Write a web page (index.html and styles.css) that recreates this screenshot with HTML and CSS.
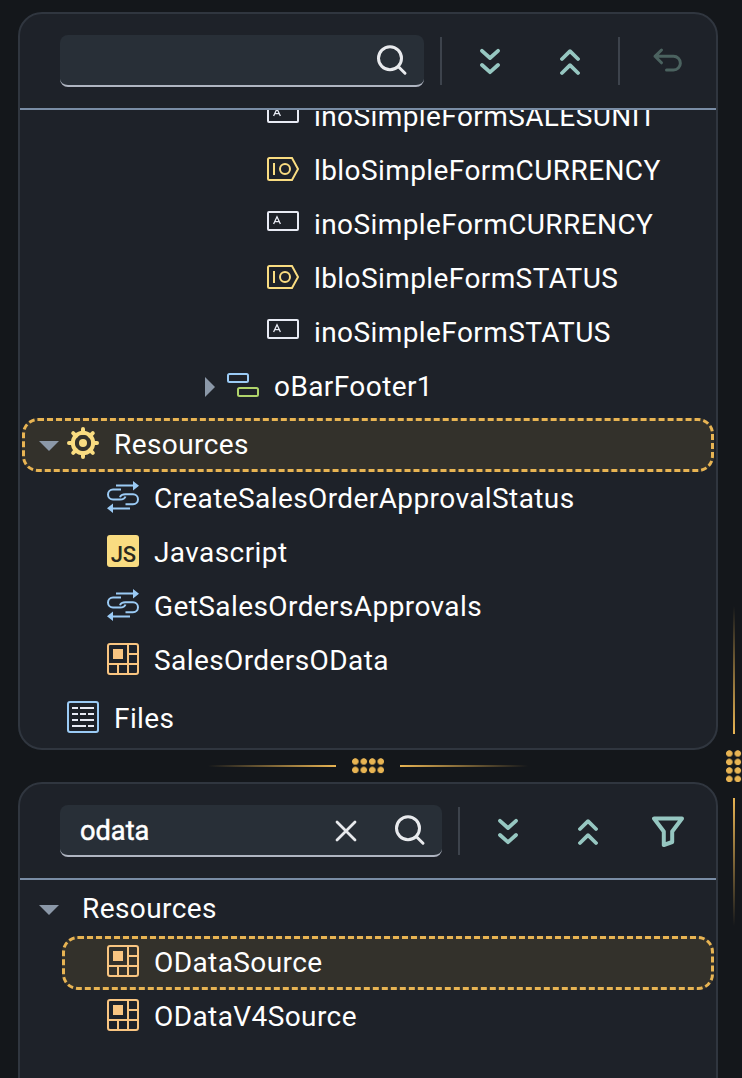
FILE: index.html
```
<!DOCTYPE html>
<html lang="en">
<head>
<meta charset="utf-8">
<title>Application tree</title>
<link rel="stylesheet" href="styles.css">
</head>
<body>
<svg class="defs" aria-hidden="true">
  <symbol id="search" viewBox="0 0 32 32"><circle cx="14" cy="14.3" r="11.5"/><path d="M22.2 22.5 29 29.2"/></symbol>
  <symbol id="down" viewBox="0 0 20 28"><path d="M2 2.8 10 10 18 2.8M2 17 10 24.2 18 17"/></symbol>
  <symbol id="up" viewBox="0 0 20 28"><path d="M2 11 10 3.2 18 11M2 25 10 17.2 18 25"/></symbol>
  <symbol id="input" viewBox="0 0 32 32"><rect x="1" y="5" width="30" height="18" rx="1"/><path class="thin" d="M6.600 17 10 9.800 13.400 17M7.600 14.600H12.400"/></symbol>
  <symbol id="label" viewBox="0 0 32 32"><path d="M2.500 5H25L31 16 25 27H2.500Q1 27 1 25.500V6.500Q1 5 2.500 5ZM7 10V22"/><circle cx="18" cy="16" r="5"/></symbol>
  <symbol id="service" viewBox="0 0 32 32"><path d="M9 4.500H26M14 8.500H6A5 5 0 0 0 6 18.500H13Q17.500 18.500 18.500 15.500M13 16.200Q14 13.200 18.500 13.200H26A5 5 0 0 1 26 23.200H18.500M6 27.500H23"/><path class="solid" d="M26 0 32 4.700 26 9.400ZM6 22.600 0 27.300 6 32Z"/></symbol>
  <symbol id="odata" viewBox="0 0 32 32"><rect x="1" y="1" width="30" height="30" rx="2"/><path d="M1 21H31M21 1V31M11 21V31M21 11H31"/><path class="solid" d="M6 6H16V16H6Z"/></symbol>
</svg>
<div class="workspace">
  <section class="panel panel-top">
    <header class="toolbar">
      <div class="search"><svg class="i-search"><use href="#search"/></svg></div>
      <span class="divider"></span>
      <svg class="i-chev"><use href="#down"/></svg>
      <svg class="i-chev"><use href="#up"/></svg>
      <span class="divider divider-undo"></span>
      <svg class="i-undo" viewBox="0 0 32 28"><path d="M9.500 3 3 9.300 9.500 15.800M3 9.300H21.500A6.500 6.500 0 0 1 21.500 23H14.500"/></svg>
    </header>
    <div class="tree tree-scrolled">
      <div class="row lv6 white"><svg class="icon"><use href="#input"/></svg><span>inoSimpleFormSALESUNIT</span></div>
      <div class="row lv6 yellow"><svg class="icon"><use href="#label"/></svg><span>lbloSimpleFormCURRENCY</span></div>
      <div class="row lv6 white"><svg class="icon"><use href="#input"/></svg><span>inoSimpleFormCURRENCY</span></div>
      <div class="row lv6 yellow"><svg class="icon"><use href="#label"/></svg><span>lbloSimpleFormSTATUS</span></div>
      <div class="row lv6 white"><svg class="icon"><use href="#input"/></svg><span>inoSimpleFormSTATUS</span></div>
      <div class="row lv5"><i class="caret-right"></i><svg class="icon" viewBox="0 0 32 32"><rect class="blue" x="1" y="5" width="20" height="8" rx="1.500"/><rect class="green" x="11" y="19" width="20" height="8" rx="1.500"/></svg><span>oBarFooter1</span></div>
      <div class="row root selected yellow"><i class="caret-down"></i><svg class="icon" viewBox="0 0 32 32"><circle class="ring" cx="16" cy="16" r="10.200"/><circle class="solid" cx="16" cy="16" r="4"/><path class="teeth" d="M16 2V6M16 26V30M2 16H6M26 16H30M6.200 6.200 9 9M23 23 25.800 25.800M25.800 6.200 23 9M9 23 6.200 25.800"/></svg><span>Resources</span></div>
      <div class="row lv2 blue"><svg class="icon"><use href="#service"/></svg><span>CreateSalesOrderApprovalStatus</span></div>
      <div class="row lv2"><b class="icon js">JS</b><span>Javascript</span></div>
      <div class="row lv2 blue"><svg class="icon"><use href="#service"/></svg><span>GetSalesOrdersApprovals</span></div>
      <div class="row lv2 orange"><svg class="icon"><use href="#odata"/></svg><span>SalesOrdersOData</span></div>
      <div class="row root lv1"><svg class="icon" viewBox="0 0 32 32"><rect class="blue" x="1" y="1" width="30" height="30" rx="2"/><path class="white" d="M5 7H11M13 7H27M5 13H11M13 13H19M21 13H27M5 19H11M13 19H27M5 25H19M21 25H27"/></svg><span>Files</span></div>
    </div>
  </section>
  <div class="splitter"><i class="fade-left"></i><i class="dots"></i><i class="fade-right"></i></div>
  <section class="panel panel-bottom">
    <header class="toolbar">
      <div class="search search-filled"><span class="query">odata</span><svg class="i-clear" viewBox="0 0 22 22"><path d="M2 2 20 20M20 2 2 20"/></svg><svg class="i-search"><use href="#search"/></svg></div>
      <span class="divider"></span>
      <svg class="i-chev"><use href="#down"/></svg>
      <svg class="i-chev"><use href="#up"/></svg>
      <svg class="i-filter" viewBox="0 0 32 32"><path d="M2 2.500H30L20.200 15.500V26L11.800 29V15.500Z"/></svg>
    </header>
    <div class="tree">
      <div class="row plain"><i class="caret-down"></i><span>Resources</span></div>
      <div class="row child selected orange"><svg class="icon"><use href="#odata"/></svg><span>ODataSource</span></div>
      <div class="row lv2 orange"><svg class="icon"><use href="#odata"/></svg><span>ODataV4Source</span></div>
    </div>
  </section>
</div>
<aside class="side-splitter"><i class="fade-up"></i><i class="dots"></i><i class="fade-down"></i></aside>
</body>
</html>
```
FILE: styles.css
```
* { box-sizing: border-box; }
body {
  margin: 0; width: 742px; height: 1078px; overflow: hidden;
  display: flex; background: #14171b; color: #fff;
  font: 28px/54px Roboto, sans-serif; letter-spacing: .41px;
}
svg { fill: none; stroke: currentColor; stroke-width: 2; flex: none; }
.defs { position: absolute; width: 0; height: 0; }
.workspace { width: 718px; padding: 12px 0 0 18px; flex: none; }
.panel { border: 2px solid #30363f; border-radius: 24px; background: #1e2229; overflow: hidden; }
.panel-top { height: 738px; }
.panel-bottom { height: 340px; }
.toolbar { height: 96px; border-bottom: 2px solid #7a8da5; display: flex; align-items: center; padding: 0 32px 0 40px; }
.search {
  width: 364px; height: 52px; flex: none; display: flex; align-items: center; justify-content: flex-end;
  background: #282f37; border-bottom: 2px solid #afb5c1; border-radius: 8px; padding-right: 16px; color: #e8eaed;
}
.search-filled { width: 382px; padding-left: 20px; }
.query { flex: 1; color: #fff; font-size: 27.2px; letter-spacing: 0; -webkit-text-stroke: .5px #fff; padding-top: 2px; }
.divider { width: 2px; height: 48px; background: #3d434c; margin-left: 16px; flex: none; }
.i-search { width: 32px; height: 32px; stroke-width: 3; stroke-linecap: round; }
.i-clear { width: 22px; height: 22px; margin-right: 37px; margin-top: 2px; stroke-width: 2.8; stroke-linecap: round; }
.i-chev { width: 20px; height: 28px; color: #96c7c1; stroke-width: 3.8; stroke-linecap: round; stroke-linejoin: round; margin-left: 38px; margin-top: 2px; }
.i-chev + .i-chev { margin-left: 60px; }
.divider-undo { margin-left: 38px; }
.i-undo { width: 32px; height: 28px; margin-left: 32px; color: #4b625f; stroke-width: 3; stroke-linecap: round; stroke-linejoin: round; }
.i-filter { width: 32px; height: 32px; margin-left: 54px; margin-top: 2px; color: #96c7c1; stroke-width: 4; stroke-linejoin: round; }
.tree { padding: 2px 2px 0; }
.tree-scrolled { margin-top: -20px; padding-top: 0; clip-path: inset(20px 0 0 0); }
.row { height: 54px; display: flex; align-items: center; position: relative; }
.row span { color: #fff; white-space: nowrap; }
.icon { width: 32px; height: 32px; margin-right: 15px; align-self: flex-start; margin-top: 9px; flex: none; }
.root { margin-top: 4px; }
.lv6 { padding-left: 245px; }
.lv5 { padding-left: 183px; }
.lv2 { padding-left: 85px; }
.lv1 { padding-left: 45px; }
.selected { background: #33312b; border: 3px dashed #e8b453; border-radius: 16px; }
.selected .icon { margin-top: 6px; }
.root.selected { padding-left: 14px; }
.child { margin-left: 40px; padding-left: 42px; }
.plain { padding-left: 17px; }
.caret-down { width: 20px; height: 10px; margin-right: 8px; margin-top: 2px; background: #8b98a8; clip-path: polygon(0 0, 100% 0, 50% 100%); }
.plain .caret-down { margin-right: 23px; }
.caret-right { width: 10px; height: 20px; margin-right: 12px; background: #8b98a8; clip-path: polygon(0 0, 100% 50%, 0 100%); }
.white { color: #e8ebf4; stroke: #e8ebf4; }
.yellow { color: #f9dc81; }
.blue { color: #9bcbf5; stroke: #9bcbf5; }
.green { stroke: #b0d46b; }
.orange { color: #f9c581; }
.solid { fill: currentColor; stroke: none; }
.thin { stroke-width: 1.3; }
.ring, .teeth { stroke-width: 4; }
.teeth { stroke-linecap: round; }
.js { background: #f9dc81; color: #292820; border-radius: 3px; font: 500 22px/40px Roboto, sans-serif; letter-spacing: -.2px; text-align: right; padding-right: 3px; }
.splitter { height: 32px; display: flex; align-items: center; justify-content: center; gap: 16px; }
.splitter .fade-left, .splitter .fade-right { width: 128px; height: 2px; }
.dots { width: 32px; height: 16px; background: radial-gradient(circle at 3.3px 3.5px, #e8b453 2.9px, transparent 3.6px) 0 0 / 8.5px 8.5px; }
.fade-left { background: linear-gradient(to left, #e8b453, transparent); }
.fade-right { background: linear-gradient(to right, #e8b453, transparent); }
.side-splitter { width: 24px; flex: none; padding: 606px 0 0 8px; display: flex; flex-direction: column; gap: 16px; }
.side-splitter .dots { width: 16px; height: 32px; }
.fade-up, .fade-down { width: 2px; height: 128px; margin-left: 7px; flex: none; }
.fade-up { background: linear-gradient(to top, #e8b453, transparent); }
.fade-down { background: linear-gradient(to bottom, #e8b453, transparent); }
```
